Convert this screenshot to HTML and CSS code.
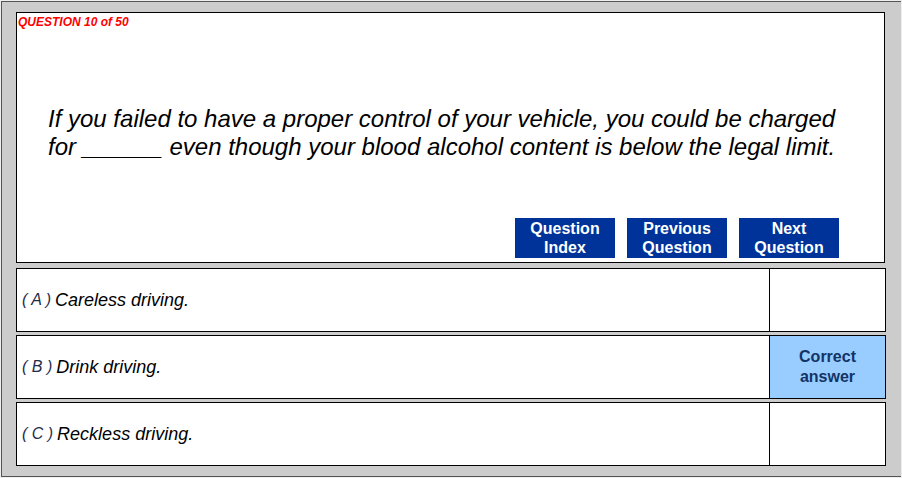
FILE: index.html
```html
<!DOCTYPE html>
<html lang="en">
<head>
    <meta charset="UTF-8">
    <meta name="viewport" content="width=device-width, initial-scale=1.0">
    <title>Driving Test - Question 10</title>
    <link rel="stylesheet" href="styles.css">
</head>
<body>

    <div class="frame">

        <div class="question-box">
            <div class="question-label">QUESTION 10 of 50</div>
            <p class="question-text">If you failed to have a proper control of your vehicle, you could be charged for ______ even though your blood alcohol content is below the legal limit.</p>
            <div class="nav-buttons">
                <button class="nav-btn">Question<br>Index</button>
                <button class="nav-btn">Previous<br>Question</button>
                <button class="nav-btn">Next<br>Question</button>
            </div>
        </div>

        <div class="option">
            <div class="option-text"><span class="option-letter">( A )</span> Careless driving.</div>
            <div class="answer-cell"></div>
        </div>

        <div class="option">
            <div class="option-text"><span class="option-letter">( B )</span> Drink driving.</div>
            <div class="answer-cell correct">Correct<br>answer</div>
        </div>

        <div class="option">
            <div class="option-text"><span class="option-letter">( C )</span> Reckless driving.</div>
            <div class="answer-cell"></div>
        </div>

    </div>

</body>
</html>
```

FILE: styles.css
```css
body {
    margin: 0;
    font-family: "Liberation Sans", Arial, sans-serif;
    background-color: #ffffff;
}
.frame {
    width: 902px;
    height: 478px;
    box-sizing: border-box;
    background-color: #cccccc;
    border: 1px solid #eeeeee;
    box-shadow: inset 1px 1px 0 #555555, inset 0 -1px 0 #555555;
    padding: 11px 15px 0 15px;
}
.question-box {
    height: 251px;
    box-sizing: border-box;
    margin-right: 1px;
    background-color: #ffffff;
    border: 1px solid #000000;
    display: flex;
    flex-direction: column;
    padding: 2px 45px 4px 1px;
}
.question-label {
    color: #ff0000;
    font-size: 12px;
    line-height: 14px;
    font-weight: bold;
    font-style: italic;
}
.question-text {
    margin: 76px 0 0 30px;
    font-size: 24px;
    line-height: 28px;
    font-style: italic;
    color: #000000;
}
.nav-buttons {
    margin-top: auto;
    display: flex;
    justify-content: flex-end;
    gap: 12px;
}
.nav-btn {
    width: 100px;
    height: 40px;
    padding: 0;
    border: none;
    background-color: #003399;
    color: #ffffff;
    font-family: "Liberation Sans", Arial, sans-serif;
    font-size: 16px;
    line-height: 19px;
    font-weight: bold;
    cursor: pointer;
}
.option {
    display: flex;
    height: 64px;
    box-sizing: border-box;
    background-color: #ffffff;
    border: 1px solid #000000;
    margin-top: 3px;
}
.question-box + .option {
    margin-top: 5px;
}
.option-text {
    flex: 1;
    display: flex;
    align-items: center;
    padding-left: 5px;
    font-size: 18px;
    font-style: italic;
    color: #000000;
}
.option-letter {
    font-size: 16px;
    color: #1f2d4d;
    margin-right: 4px;
}
.answer-cell {
    width: 115px;
    border-left: 1px solid #000000;
    display: flex;
    align-items: center;
    justify-content: center;
    text-align: center;
}
.answer-cell.correct {
    background-color: #99ccff;
    color: #123466;
    font-size: 16px;
    line-height: 20px;
    font-weight: bold;
}
```
